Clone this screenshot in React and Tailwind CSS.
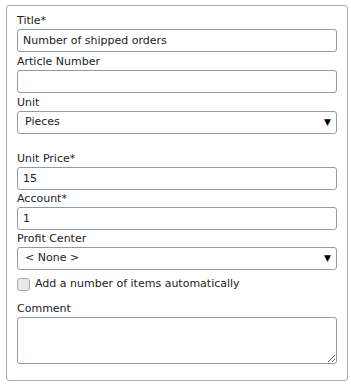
import React from "react";

const font = { fontFamily: '"DejaVu Sans", Verdana, sans-serif' };

const Label = ({ children, className = "h-[18px]" }) => (
  <div className={`flex items-end pb-[1px] text-[11px] leading-[14px] text-[#222] ${className}`}>
    {children}
  </div>
);

const TextBox = ({ value }) => (
  <input
    type="text"
    defaultValue={value}
    readOnly
    className="block h-[23px] w-full rounded-[3px] border border-[#8d9aa8] bg-white px-[5px] text-[11px] text-[#222] outline-none"
  />
);

const SelectBox = ({ value }) => (
  <div className="flex h-[23px] w-full items-center justify-between rounded-[3px] border border-[#8d9aa8] bg-white pl-[7px] pr-[5px] text-[11px] text-[#222]">
    <span>{value}</span>
    <span className="text-[9px] text-black">▼</span>
  </div>
);

export default function App() {
  return (
    <div className="h-[387px] w-[351px] bg-white" style={font}>
      <div className="ml-[6px] mt-[5px] h-[376px] w-[342px] rounded-[3px] border border-[#acacac] px-[10px] pt-[5px]">
        <Label>Title*</Label>
        <TextBox value="Number of shipped orders" />

        <Label>Article Number</Label>
        <TextBox value="" />

        <Label>Unit</Label>
        <SelectBox value="Pieces" />

        <Label className="mt-[15px] h-[18px]">Unit Price*</Label>
        <TextBox value="15" />

        <Label className="h-[17px]">Account*</Label>
        <TextBox value="1" />

        <Label className="h-[17px]">Profit Center</Label>
        <SelectBox value="< None >" />

        <div className="mt-[8px] flex h-[13px] items-center gap-[5px] text-[11px] text-[#222]">
          <span className="h-[13px] w-[13px] shrink-0 rounded-[3px] border border-[#a9a9a9] bg-[#e9e9e9]"></span>
          <span>Add a number of items automatically</span>
        </div>

        <Label className="mt-[8px] h-[18px]">Comment</Label>
        <textarea
          readOnly
          className="block h-[47px] w-full resize-y rounded-[3px] border border-[#8d9aa8] bg-white outline-none"
        ></textarea>
      </div>
    </div>
  );
}
